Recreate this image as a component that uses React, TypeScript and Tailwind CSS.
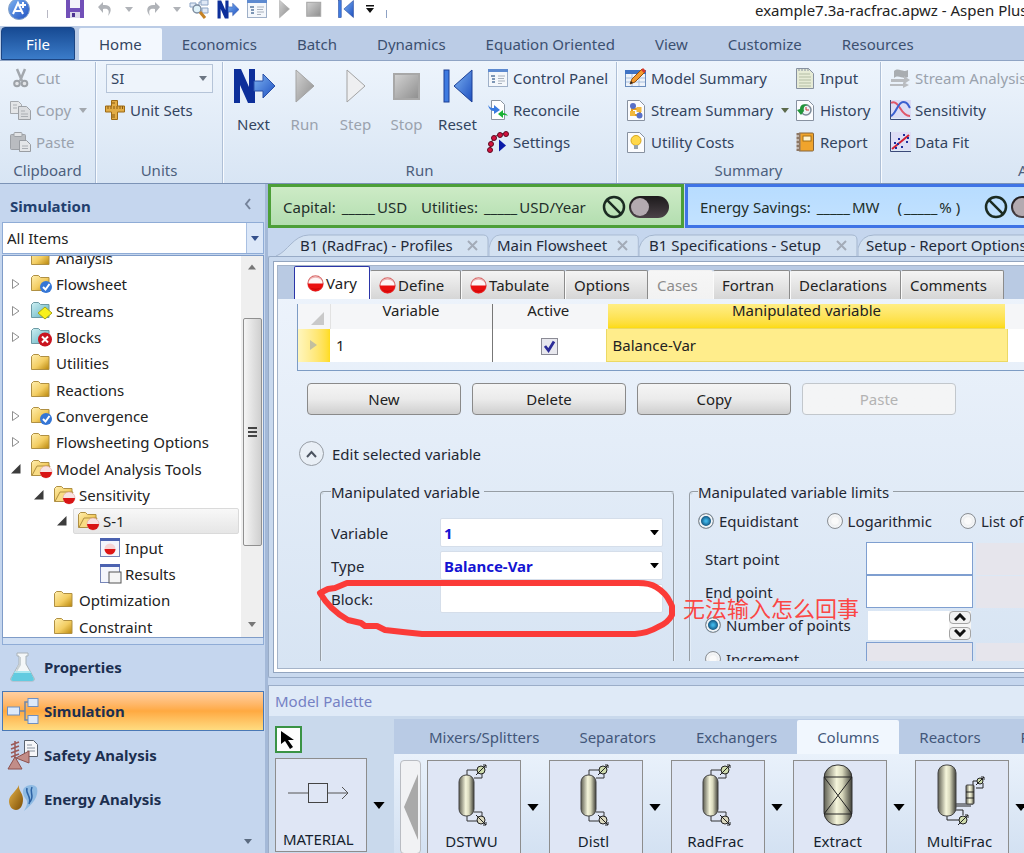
import type { ReactNode } from 'react';
import { Ban } from 'lucide-react';

const MENU_TABS = ['Home', 'Economics', 'Batch', 'Dynamics', 'Equation Oriented', 'View', 'Customize', 'Resources'];

const FORM_TABS = [
  { label: 'Define', status: true, width: 'w-[91px]' },
  { label: 'Tabulate', status: true, width: 'w-[104px]' },
  { label: 'Options', width: 'w-[83px]' },
  { label: 'Cases', disabled: true, width: 'w-[65px]' },
  { label: 'Fortran', width: 'w-[77px]' },
  { label: 'Declarations', width: 'w-[111px]' },
  { label: 'Comments', width: 'w-[103px]' },
];

const DOC_TABS = [
  { label: 'B1 (RadFrac) - Profiles', width: 'w-[213px]', pad: 'pl-6' },
  { label: 'Main Flowsheet', width: 'w-[150px]', pad: 'pl-2' },
  { label: 'B1 Specifications - Setup', width: 'w-[219px]', pad: 'pl-[10px]' },
  { label: 'Setup - Report Options', width: 'w-[219px]', pad: 'pl-2' },
];

type TreeItem = {
  label: string;
  level: number;
  icon: 'folder' | 'done' | 'streams' | 'blocks' | 'open' | 'input' | 'results';
  state?: 'closed' | 'open';
  selected?: boolean;
};

const TREE: TreeItem[] = [
  { label: 'Analysis', level: 0, icon: 'folder' },
  { label: 'Flowsheet', level: 0, icon: 'done', state: 'closed' },
  { label: 'Streams', level: 0, icon: 'streams', state: 'closed' },
  { label: 'Blocks', level: 0, icon: 'blocks', state: 'closed' },
  { label: 'Utilities', level: 0, icon: 'folder' },
  { label: 'Reactions', level: 0, icon: 'folder' },
  { label: 'Convergence', level: 0, icon: 'done', state: 'closed' },
  { label: 'Flowsheeting Options', level: 0, icon: 'folder', state: 'closed' },
  { label: 'Model Analysis Tools', level: 0, icon: 'open', state: 'open' },
  { label: 'Sensitivity', level: 1, icon: 'open', state: 'open' },
  { label: 'S-1', level: 2, icon: 'open', state: 'open', selected: true },
  { label: 'Input', level: 3, icon: 'input' },
  { label: 'Results', level: 3, icon: 'results' },
  { label: 'Optimization', level: 1, icon: 'folder' },
  { label: 'Constraint', level: 1, icon: 'folder' },
];

const INDENT = ['pl-2', 'pl-[31px]', 'pl-[54px]', 'pl-[77px]'];

/* ---------- small shared pieces ---------- */

function Caret({ className = 'text-[#5b6b80]', size = 8 }: { className?: string; size?: number }) {
  return (
    <svg width={size} height={size / 2 + 1} viewBox="0 0 8 5" className={`shrink-0 ${className}`} fill="currentColor">
      <path d="M0 0h8L4 5z" />
    </svg>
  );
}

function StatusDot({ size = 17 }: { size?: number }) {
  return (
    <svg width={size} height={size} viewBox="0 0 17 17" className="shrink-0">
      <circle cx="8.5" cy="8.5" r="7.6" fill="#fdf6f6" stroke="#d86a6a" strokeWidth="1.2" />
      <path d="M2 6a7 7 0 0 1 13 0 8 8 0 0 0-13 0z" fill="#eeb4b4" />
      <path d="M.7 8.5a7.8 7.8 0 0 0 15.6 0z" fill="#ea1010" />
      <path d="M3 12.5a7.8 7.8 0 0 0 11 0 9 5 0 0 1-11 0z" fill="#c40404" />
    </svg>
  );
}

function Defs() {
  return (
    <svg width="0" height="0" className="absolute">
      <defs>
        <linearGradient id="folder" x1="0" y1="0" x2="1" y2="1">
          <stop offset="0" stopColor="#ffefb0" />
          <stop offset="0.55" stopColor="#f3cd62" />
          <stop offset="1" stopColor="#b8860b" />
        </linearGradient>
        <linearGradient id="cyan" x1="0" y1="0" x2="1" y2="1">
          <stop offset="0" stopColor="#cdeff2" />
          <stop offset="1" stopColor="#5fb0c0" />
        </linearGradient>
        <linearGradient id="blue" x1="0" y1="0" x2="1" y2="1">
          <stop offset="0" stopColor="#7fb4f2" />
          <stop offset="1" stopColor="#1d4fc0" />
        </linearGradient>
        <linearGradient id="gray" x1="0" y1="0" x2="1" y2="1">
          <stop offset="0" stopColor="#d3d3d3" />
          <stop offset="1" stopColor="#8e8e8e" />
        </linearGradient>
        <linearGradient id="vessel" x1="0" y1="0" x2="1" y2="0">
          <stop offset="0" stopColor="#5e5e52" />
          <stop offset="0.45" stopColor="#f6f6dc" />
          <stop offset="0.65" stopColor="#d9d9bd" />
          <stop offset="1" stopColor="#3f3f38" />
        </linearGradient>
        <linearGradient id="amber" x1="0" y1="0" x2="1" y2="1">
          <stop offset="0" stopColor="#e9b64a" />
          <stop offset="1" stopColor="#7d4e05" />
        </linearGradient>
      </defs>
    </svg>
  );
}

function Svg({ w = 20, h = 20, box, children }: { w?: number; h?: number; box?: string; children: ReactNode }) {
  return (
    <svg width={w} height={h} viewBox={box ?? `0 0 ${w} ${h}`} className="relative shrink-0" fill="none">
      {children}
    </svg>
  );
}

/* ---------- icons ---------- */

const NextIcon = ({ w = 42, h = 36 }: { w?: number; h?: number }) => (
  <Svg w={w} h={h} box="0 0 42 36">
    <path d="M1 1h7l8 18V1h6v34h-7L7 17v18H1z" fill="#0d2f9a" />
    <path d="M21 13h9V6l12 12-12 12v-7h-9z" fill="url(#blue)" stroke="#2a50a8" />
  </Svg>
);

const PlayIcon = ({ w = 20, h = 36, hollow = false }: { w?: number; h?: number; hollow?: boolean }) => (
  <Svg w={w} h={h} box="0 0 20 36">
    <path d="M1 2l18 16L1 34z" fill={hollow ? '#eeeff1' : 'url(#gray)'} stroke="#a3a3a3" />
  </Svg>
);

const StopIcon = ({ w = 28, h = 36 }: { w?: number; h?: number }) => (
  <Svg w={w} h={h} box="0 0 28 36">
    <rect x="1" y="6" width="25" height="25" fill="url(#gray)" stroke="#a8a8a8" strokeWidth="2" />
  </Svg>
);

const ResetIcon = ({ w = 30, h = 36 }: { w?: number; h?: number }) => (
  <Svg w={w} h={h} box="0 0 30 36">
    <rect x="1" y="2" width="5" height="32" fill="#3e7ae0" stroke="#1b3f96" />
    <path d="M29 2v32L11 18z" fill="url(#blue)" stroke="#1b3f96" />
  </Svg>
);

const PanelIcon = () => (
  <Svg>
    <rect x="0.5" y="1.5" width="19" height="17" fill="#f4f7fb" stroke="#9fb0c8" />
    <rect x="0" y="1" width="20" height="3" fill="#5d8ad0" />
    <path d="M3 8h4M4 11h3M4 14h3" stroke="#56779f" strokeWidth="1.5" />
    <path d="M10 8h7M10 10.500h6M10 13h7M10 15.500h4" stroke="#a8b1bd" />
  </Svg>
);

const ReconcileIcon = () => (
  <Svg>
    <path d="M3.500 .5h9l4 4v15h-13z" fill="#fff" stroke="#8a94a0" />
    <path d="M0 5c2 3 4 3 6 3V5l6 5-6 4v-3C3 11 1 9 0 5z" fill="#3a7be0" />
    <path d="M20 16c-1-2-3-3-5-3v-3l-5 4 5 4v-3c2 0 4 0 5 1z" fill="#19b234" />
  </Svg>
);

const SettingsIcon = () => (
  <Svg w={22} h={22}>
    <path d="M3 18L4 12 7 6l6-3 7-1" stroke="#5a2030" />
    {[[3, 19], [4, 13], [7, 7], [13, 4], [19, 3]].map(([x, y]) => (
      <circle key={x} cx={x} cy={y} r="2.500" fill="#d5123f" stroke="#5c0b20" />
    ))}
    <path d="M12 8.500l7 6-7 6z" fill="#0a1aa8" />
  </Svg>
);

const CutIcon = () => (
  <Svg>
    <path d="M6 1l5 12M14 1L9 13" stroke="#a3a8ae" strokeWidth="2.500" />
    <circle cx="6" cy="15.500" r="2.800" stroke="#9da2a8" strokeWidth="2" fill="#e3e5e8" />
    <circle cx="13.500" cy="15.500" r="2.800" stroke="#9da2a8" strokeWidth="2" fill="#e3e5e8" />
  </Svg>
);

const CopyIcon = () => (
  <Svg w={22}>
    <path d="M.5 1.500h8l3 3v9H.5z" fill="#e4e6e8" stroke="#a5a9ae" />
    <path d="M8.500 6.500h8l4 4v9h-12z" fill="#dadcdf" stroke="#9da1a6" />
    <path d="M3 5h4M3 8h4M11 11h4M11 14h7M11 16.500h7" stroke="#aaaeb3" />
  </Svg>
);

const PasteIcon = () => (
  <Svg w={22}>
    <rect x="0.5" y="2.500" width="15" height="15" rx="1" fill="#b9bcc0" stroke="#9da1a6" />
    <rect x="4" y="0.500" width="8" height="4" rx="1" fill="#e1e3e5" stroke="#9da1a6" />
    <path d="M9.500 8.500h7l4 4v7h-11z" fill="#e4e6e8" stroke="#999da2" />
    <path d="M12 14h6M12 16.500h6" stroke="#aaaeb3" />
  </Svg>
);

const UnitIcon = () => (
  <Svg>
    <path d="M6.500 .5h6V6h7v6h-7v7.500h-6V12H.5V6h6z" fill="#e2ac45" stroke="#9c6a16" />
    <path d="M3 6v3M6 6v3M9 6v3M12 6v3M15 6v3M17.500 6v3M7 15h3M7 17h3M7 3h3" stroke="#8a5a10" />
  </Svg>
);

const ModelSummaryIcon = () => (
  <Svg w={22}>
    <rect x="0.5" y="2.500" width="20" height="16" fill="#eef3fa" stroke="#6a8cbc" />
    <rect x="0" y="2" width="21" height="4" fill="#3f73c4" />
    <path d="M1 10h19M1 14h19M7 6v12M14 6v12" stroke="#a9bfdd" />
    <path d="M5 16l2-5L17 1l3 3L10 14z" fill="#f39a2e" stroke="#96500c" />
    <path d="M16 2l2-2 3 3-2 2z" fill="#d63a2c" />
    <path d="M5 16l1-3 2 2z" fill="#222" />
  </Svg>
);

const DocIcon = ({ kind }: { kind: 'stream' | 'bulb' | 'history' | 'input' }) => (
  <Svg w={18} h={21}>
    <path d="M.5 .5h12l5 5v15H.5z" fill={kind === 'input' ? '#e6ebd6' : '#fbfcfe'} stroke="#8791a0" />
    {kind === 'stream' && (
      <>
        <path d="M5 6v9h8V9H6" stroke="#e29a20" strokeWidth="2" />
        <circle cx="6" cy="6" r="3" fill="#5770c8" />
        <rect x="9.500" y="7" width="5" height="5" fill="#f2b93e" />
        <rect x="3" y="11" width="5" height="5" fill="#f2b93e" />
        <circle cx="12.500" cy="15.500" r="3" fill="#5770c8" />
      </>
    )}
    {kind === 'bulb' && (
      <>
        <circle cx="9" cy="8.500" r="5" fill="#ffd84a" stroke="#d6a51c" />
        <path d="M7 13h4v4H7z" fill="#96a3ae" />
      </>
    )}
    {kind === 'history' && (
      <>
        <circle cx="10" cy="10" r="5" fill="#eef2f5" stroke="#7b8a98" strokeWidth="1.500" />
        <path d="M10 7v3h3" stroke="#c33" />
        <path d="M1 10l4 5 3-4C7 7 9 5 13 5 7 3 4 5 4 9z" fill="#23953a" />
      </>
    )}
    {kind === 'input' && (
      <>
        <path d="M3 6h11M3 9h12M3 12h12M3 15h12M3 18h12" stroke="#b3bda4" />
        <path d="M3 0v3M6 0v3M9 0v3M12 0v3" stroke="#8791a0" />
      </>
    )}
  </Svg>
);

const ReportIcon = () => (
  <Svg w={18}>
    <rect x="2.500" y="1" width="15" height="18" rx="1" fill="#f0a42c" stroke="#85643a" />
    <rect x="0.500" y="1" width="4" height="18" fill="#8d7764" />
    <rect x="7" y="4" width="8" height="5" fill="#fff3cf" stroke="#a36f14" />
    <path d="M0 4h3M0 8h3M0 12h3M0 16h3" stroke="#eee" />
  </Svg>
);

const StreamAnalysisIcon = () => (
  <Svg w={21}>
    <path d="M4 3c5-4 8 2 14-1v7c-6 3-9-3-14 1z" fill="#a9adb1" />
    <path d="M1 11h13V8l6 4-6 4v-2H1zM0 16h13v-2l6 3-6 3v-2H0z" fill="#b9bcc0" />
  </Svg>
);

const SensitivityIcon = () => (
  <Svg w={21}>
    <rect x="0" y="0" width="21" height="18" fill="#dcdcf5" />
    <path d="M.5 0v19.500H21" stroke="#3b4a78" />
    <path d="M1 3c3-2 6 0 9 5s6 8 10 8" stroke="#e0566a" strokeWidth="2" />
    <path d="M1 16C6 14 8 2 13 2s5 3 7 6" stroke="#3b5fd0" strokeWidth="2" />
  </Svg>
);

const DataFitIcon = () => (
  <Svg w={21}>
    <rect x="0" y="0" width="21" height="18" fill="#dedef6" />
    <path d="M.5 0v19.500H21" stroke="#3b4a78" />
    <path d="M2 17L19 3" stroke="#d01f34" strokeWidth="2" />
    <path d="M4 11h2M8 7h2M13 3h2M11 15h2M16 10h2M5 16h2M17 6h2M7 12h2" stroke="#1f2e9c" strokeWidth="2" />
  </Svg>
);

function TreeIcon({ kind }: { kind: TreeItem['icon'] }) {
  if (kind === 'input' || kind === 'results') {
    return (
      <Svg w={22} h={20}>
        <rect x="0.500" y="0.500" width="19" height="18" fill="#f4f6fc" stroke="#7786b8" />
        <rect x="0" y="0" width="20" height="3" fill="#4b62b0" />
        {kind === 'input' ? (
          <>
            <circle cx="10" cy="11" r="5.500" fill="#f6d5d5" />
            <path d="M4.500 11a5.500 5.500 0 0 0 11 0z" fill="#dd1414" />
          </>
        ) : (
          <rect x="9" y="8" width="12" height="11" fill="#f5f5f5" stroke="#555" />
        )}
      </Svg>
    );
  }
  const cyan = kind === 'streams' || kind === 'blocks';
  return (
    <Svg w={22} h={20}>
      <path d="M.5 3.500l2-2h5l2 2h8.500v13H.5z" fill={cyan ? 'url(#cyan)' : 'url(#folder)'} stroke={cyan ? '#6d9aa4' : '#b09043'} />
      {kind === 'open' && <path d="M1 16.500L6 7h13l-4 9.500z" fill="#f9dc84" stroke="#b09043" />}
      {kind === 'done' && (
        <>
          <circle cx="15" cy="13" r="6" fill="#3576d6" />
          <path d="M12 13l2.500 2.500L18.500 10" stroke="#fff" strokeWidth="2" />
        </>
      )}
      {kind === 'streams' && <path d="M14 6l7 6-7 6-7-6z" fill="#f8f01c" stroke="#a9a312" />}
      {kind === 'blocks' && (
        <>
          <circle cx="14" cy="12.500" r="7" fill="#c91420" />
          <path d="M11 9.500l6 6M17 9.500l-6 6" stroke="#fff" strokeWidth="2" />
        </>
      )}
      {kind === 'open' && (
        <>
          <circle cx="15" cy="13" r="6" fill="#f7e2e2" stroke="#d99" strokeWidth="0.500" />
          <path d="M9 13a6 6 0 0 0 12 0z" fill="#d81414" />
        </>
      )}
    </Svg>
  );
}

const FlaskIcon = () => (
  <Svg w={32} h={32}>
    <path d="M10 2h11v3h-2v8l8 14c1 2 0 3-2 3H6c-2 0-3-1-2-3l8-14V5h-2z" fill="#f4f7f8" stroke="#a9b2b8" />
    <path d="M8 20h15l4 8c0 1-1 2-2 2H6c-1 0-2-1-2-2z" fill="#62cbe0" />
    <path d="M8 20h15l1 2H7z" fill="#a9e8f0" />
    <path d="M12 6h2v8l-5 8 1-6 2-3z" fill="#c9d0d3" />
  </Svg>
);

const FlowIcon = () => (
  <Svg w={32} h={32}>
    <path d="M12 16h6M28 7H18v18h4" stroke="#6f86a8" strokeWidth="1.500" />
    <rect x="0.500" y="12" width="12" height="8" fill="#dde9fa" stroke="#6f8fc0" />
    <rect x="21" y="3.500" width="10" height="8" fill="#dde9fa" stroke="#6f8fc0" />
    <rect x="21" y="20.500" width="10" height="8" fill="#dde9fa" stroke="#6f8fc0" />
  </Svg>
);

const SafetyIcon = () => (
  <Svg w={32} h={32}>
    <path d="M17.500 1.500h9l4 4v12h-13z" fill="#f6f7f9" stroke="#59636e" />
    <path d="M20 6h5M20 9h8M20 12h8" stroke="#8994a0" />
    <path d="M8 19V2M4 6l8-3M4 10l8-3M4 14l8-3M4 18l8-3" stroke="#9c5a58" strokeWidth="1.500" />
    <path d="M8 18L1 30h14zM9 19l13-7v12z" fill="#c28d88" stroke="#8d514e" />
  </Svg>
);

const EnergyIcon = () => (
  <Svg w={32} h={32}>
    <path d="M12 2c-1 5 4 8 4 14 0 7-3 11-7 11s-7-4-7-9C2 12 9 9 12 2z" fill="url(#amber)" />
    <path d="M17 5c4-4 11-4 13 0 2 8-4 16-13 23 4-7 4-10 1-13-2-3-3-7-1-10z" fill="#8fbbe3" />
    <path d="M20 5c-2 6 5 8 2 16M25 4c-3 6 3 8-2 15" stroke="#2d63a5" strokeWidth="1.500" />
  </Svg>
);

function Exchanger({ x, y, r = 4 }: { x: number; y: number; r?: number }) {
  return (
    <g stroke="#222">
      <circle cx={x} cy={y} r={r} fill="#cfdcae" />
      <path d={`M${x - r - 1} ${y + r + 1}L${x + r + 1} ${y - r - 1}m-3 0h3v3`} />
    </g>
  );
}

function ColumnDrawing({ kind }: { kind: string }) {
  if (kind === 'Extract') {
    return (
      <Svg w={60} h={62}>
        <rect x="16" y="1" width="28" height="60" rx="13" fill="url(#vessel)" stroke="#333" />
        <path d="M16 13h28M16 50h28M16 13l28 37M44 13L16 50" stroke="#222" />
      </Svg>
    );
  }
  if (kind === 'MultiFrac') {
    return (
      <Svg w={60} h={62}>
        <path d="M17 50v6h13M26 40h17M26 42h15M26 46h7v5M43 22v-5h6M46 24h7v-5" stroke="#222" />
        <rect x="8" y="1" width="18" height="51" rx="8" fill="url(#vessel)" stroke="#444" />
        <rect x="36" y="21" width="8" height="19" rx="1" fill="url(#vessel)" stroke="#444" />
        <path d="M36 28h8M36 34h8" stroke="#222" />
        <Exchanger x={33} y={56} />
        <Exchanger x={50} y={17} r={3} />
      </Svg>
    );
  }
  return (
    <Svg w={60} h={62}>
      <path d="M25 12V6h12M32 14h8V8M25 51v6h12M32 48h8v6" stroke="#333" />
      <rect x="17" y="11" width="15" height="41" rx="7" fill="url(#vessel)" stroke="#444" />
      <Exchanger x={39} y={6} />
      <g stroke="#222">
        <circle cx="39" cy="56" r="4" fill="#dcd9bf" />
        <path d="M34 51l10 10m-3 0h3v-3" />
      </g>
    </Svg>
  );
}

/* ---------- ribbon ---------- */

function Command({ icon, label, disabled, menu }: { icon: ReactNode; label: string; disabled?: boolean; menu?: boolean }) {
  return (
    <button
      type="button"
      disabled={disabled}
      className="flex h-8 items-center gap-1 whitespace-nowrap text-[#33445f] disabled:text-[#9aa2ad]"
    >
      <span className="flex w-[22px] justify-center">{icon}</span>
      {label}
      {menu && <Caret className={disabled ? 'ml-1 text-[#a3a8ae]' : 'ml-1 text-[#5c6a4c]'} />}
    </button>
  );
}

function BigCommand({ icon, label, disabled }: { icon: ReactNode; label: string; disabled?: boolean }) {
  return (
    <button
      type="button"
      disabled={disabled}
      className="flex w-[51px] flex-col items-center gap-2 pt-1 text-[#33445f] disabled:text-[#9aa2ad]"
    >
      <span className="flex h-10 items-center">{icon}</span>
      {label}
    </button>
  );
}

function RibbonGroup({ title, className, children }: { title: string; className: string; children: ReactNode }) {
  return (
    <section className={`flex shrink-0 flex-col border-r border-[#aebfd6] shadow-[1px_0_0_#f8fbff] ${className}`}>
      <div className="flex h-[98px]">{children}</div>
      <h2 className="text-center text-[#4d5f7d]">{title}</h2>
    </section>
  );
}

function Ribbon() {
  return (
    <header>
      <div className="flex h-[26px] items-start justify-between overflow-hidden bg-white">
        <div className="flex h-[18px] items-center gap-3 pl-2">
          <Svg w={22} h={22}>
            <circle cx="11" cy="11" r="10.500" fill="url(#blue)" stroke="#87a3c8" />
            <path d="M5 16L10 5l5 11M7 13h6M15 4v6M12 7h6" stroke="#fff" strokeWidth="2" />
          </Svg>
          <span className="mx-[5px] h-2 w-px self-end bg-[#b8b8c4]" />
          <Svg w={20} h={20}>
            <path d="M1 1h18v18H1z" fill="#7250b8" />
            <path d="M5 1h10v8H5z" fill="#f4f2fa" />
            <path d="M5 13h10v6H5z" fill="#dcd8ea" />
            <path d="M7 14h3v4H7z" fill="#4d3390" />
          </Svg>
          <Svg w={16} h={16}>
            <path d="M1 6l5-5v3c8-1 10 5 5 11 2-6 0-8-5-7v4z" fill="#b0b3b8" />
          </Svg>
          <Caret className="text-[#b0b3b8]" />
          <Svg w={16} h={16}>
            <path d="M15 6l-5-5v3C2 3 0 9 5 15 3 9 5 7 10 8v4z" fill="#b0b3b8" />
          </Svg>
          <Caret className="text-[#b0b3b8]" />
          <div className="-ml-1 flex items-center gap-2">
            <Svg w={20} h={20}>
              <path d="M1 4h6v4H1zM12 1h7v5h-7zM13 9h6v5h-6zM7 6h3v6h3M10 6V3h2" fill="#dfe8f5" stroke="#8ba3c4" />
              <circle cx="8" cy="10" r="4" fill="#dff2fa" stroke="#7d8da0" strokeWidth="1.500" />
              <path d="M11 13l5 6" stroke="#c58225" strokeWidth="3" />
            </Svg>
            <NextIcon w={22} h={19} />
            <PanelIcon />
          </div>
          <div className="flex items-center gap-4">
            <PlayIcon w={11} h={20} />
            <StopIcon w={16} h={20} />
            <ResetIcon w={16} h={20} />
          </div>
          <Svg w={8} h={8}>
            <path d="M0 0h8v1.500H0zM0 3h8L4 8z" fill="#111" />
          </Svg>
          <span className="h-2 w-px self-end bg-[#8ea2c4]" />
        </div>
        <div className="w-[269px] shrink-0 overflow-hidden whitespace-nowrap text-[#222]">
          example7.3a-racfrac.apwz - Aspen Plus V8.4
        </div>
      </div>

      <nav className="flex h-[34px] items-end bg-[#bbcce6] pl-px">
        <button
          type="button"
          className="mr-1 h-[33px] w-[74px] rounded-t border border-[#1c4583] bg-linear-to-b from-[#174a93] to-[#3b7cc9] text-white"
        >
          File
        </button>
        {MENU_TABS.map((tab) => (
          <button
            key={tab}
            type="button"
            className={
              tab === 'Home'
                ? 'h-8 rounded-t-xs bg-[#f3f8fe] px-5 text-[#33445f]'
                : 'h-8 whitespace-nowrap px-5 text-[#3c5070]'
            }
          >
            {tab}
          </button>
        ))}
      </nav>

      <div className="flex h-[124px] overflow-hidden border-t border-b border-t-[#8fa4c4] border-b-[#7c93b6] bg-linear-to-b from-[#edf4fc] to-[#d8e5f4] pt-px">
        <RibbonGroup title="Clipboard" className="w-24">
          <div className="pl-[10px]">
            <Command icon={<CutIcon />} label="Cut" disabled />
            <Command icon={<CopyIcon />} label="Copy" disabled menu />
            <Command icon={<PasteIcon />} label="Paste" disabled />
          </div>
        </RibbonGroup>
        <RibbonGroup title="Units" className="w-[127px]">
          <div className="pl-2">
            <div className="relative ml-[2px] flex h-8 items-center">
              <select
                aria-label="Unit set"
                className="h-[29px] w-[107px] appearance-none border border-[#b5c4d8] bg-[#eef4fb] px-1 text-[#33445f]"
              >
                <option>SI</option>
              </select>
              <Caret className="pointer-events-none absolute right-[6px] text-[#6c7683]" />
            </div>
            <Command icon={<UnitIcon />} label="Unit Sets" />
          </div>
        </RibbonGroup>
        <RibbonGroup title="Run" className="w-[394px]">
          <div className="flex items-start pl-[5px]">
            <BigCommand icon={<NextIcon />} label="Next" />
            <BigCommand icon={<PlayIcon />} label="Run" disabled />
            <BigCommand icon={<PlayIcon hollow />} label="Step" disabled />
            <BigCommand icon={<StopIcon />} label="Stop" disabled />
            <BigCommand icon={<ResetIcon />} label="Reset" />
          </div>
          <div className="pl-1">
            <Command icon={<PanelIcon />} label="Control Panel" />
            <Command icon={<ReconcileIcon />} label="Reconcile" />
            <Command icon={<SettingsIcon />} label="Settings" />
          </div>
        </RibbonGroup>
        <RibbonGroup title="Summary" className="w-[264px]">
          <div className="w-[177px] shrink-0 pl-2">
            <Command icon={<ModelSummaryIcon />} label="Model Summary" />
            <Command icon={<DocIcon kind="stream" />} label="Stream Summary" menu />
            <Command icon={<DocIcon kind="bulb" />} label="Utility Costs" />
          </div>
          <div>
            <Command icon={<DocIcon kind="input" />} label="Input" />
            <Command icon={<DocIcon kind="history" />} label="History" />
            <Command icon={<ReportIcon />} label="Report" />
          </div>
        </RibbonGroup>
        <RibbonGroup title="Analysis" className="w-[332px]">
          <div className="pl-2">
            <Command icon={<StreamAnalysisIcon />} label="Stream Analysis" disabled menu />
            <Command icon={<SensitivityIcon />} label="Sensitivity" />
            <Command icon={<DataFitIcon />} label="Data Fit" />
          </div>
        </RibbonGroup>
      </div>
    </header>
  );
}

/* ---------- navigation pane ---------- */

function TreeRow({ item }: { item: TreeItem }) {
  return (
    <li className={`flex items-center ${INDENT[item.level]}`}>
      <span className="flex w-4 shrink-0 items-center">
        {item.state === 'closed' && (
          <Svg w={9} h={12}>
            <path d="M1.500 1.500v9L8 6z" stroke="#8f8f8f" fill="#fff" />
          </Svg>
        )}
        {item.state === 'open' && (
          <Svg w={10} h={10}>
            <path d="M9.500 0v9.500H0z" fill="#3c3c3c" />
          </Svg>
        )}
      </span>
      <span
        className={`flex h-[26px] items-center gap-[3px] whitespace-nowrap pl-1 ${
          item.selected
            ? 'mr-[2px] flex-1 rounded-xs border border-[#dadada] bg-linear-to-b from-[#f8f8f8] to-[#e6e6e6]'
            : ''
        }`}
      >
        <TreeIcon kind={item.icon} />
        {item.label}
      </span>
    </li>
  );
}

function NavigationPane() {
  const sections = [
    { label: 'Properties', icon: <FlaskIcon /> },
    { label: 'Simulation', icon: <FlowIcon />, active: true },
    { label: 'Safety Analysis', icon: <SafetyIcon /> },
    { label: 'Energy Analysis', icon: <EnergyIcon /> },
  ];
  return (
    <aside className="flex w-[268px] shrink-0 flex-col border-r-[3px] border-[#a4b9d8] pr-px pl-[2px]">
      <div className="flex h-[38px] items-center justify-between px-2 pt-[6px]">
        <h2 className="font-bold text-[#22406e]">Simulation</h2>
        <button type="button" aria-label="Collapse" className="px-1 pb-1">
          <Svg w={9} h={14}>
            <path d="M7 2L3 7l4 5" stroke="#75839a" strokeWidth="2" />
          </Svg>
        </button>
      </div>
      <div className="relative flex h-8 items-center">
        <select
          aria-label="Filter items"
          className="h-8 w-full appearance-none border border-[#8facd6] bg-white px-1 text-[#222]"
        >
          <option>All Items</option>
        </select>
        <span className="pointer-events-none absolute top-px right-px flex h-[30px] w-[17px] items-center justify-center border-l border-[#a9c0e2] bg-[#dbe7f8]">
          <Caret className="text-[#34508c]" />
        </span>
      </div>
      <div className="mt-px flex h-[383px] overflow-hidden border border-[#7f9cc8] bg-white">
        <ul className="-mt-[11px] grid h-[395px] flex-1 auto-rows-fr text-[#222]">
          {TREE.map((item) => (
            <TreeRow key={item.label} item={item} />
          ))}
        </ul>
        <div className="flex w-[22px] flex-col items-center bg-[#efefef] pt-2 pb-[10px]">
          <Svg w={8} h={6}>
            <path d="M0 5.500L4 .5l4 5z" fill="#777" />
          </Svg>
          <div className="mt-12 flex h-[228px] w-[19px] flex-col items-center justify-center gap-[2px] rounded-xs border border-[#909090] bg-linear-to-r from-[#f5f5f5] to-[#cfcfcf]">
            <span className="h-[2px] w-[9px] bg-[#444]" />
            <span className="h-[2px] w-[9px] bg-[#444]" />
            <span className="h-[2px] w-[9px] bg-[#444]" />
          </div>
          <Caret className="mt-auto text-[#777]" />
        </div>
      </div>
      <div className="mb-[2px] h-[7px] shrink-0 border-x border-b border-[#8facd6] bg-[#d0dff3]" />
      <nav className="flex flex-col gap-1">
        {sections.map((section) => (
          <button
            key={section.label}
            type="button"
            className={`flex h-10 items-center gap-[5px] border px-1 text-left font-bold text-[#1c2f50] ${
              section.active
                ? 'border-[#4b79b5] bg-linear-to-b from-[#ffcfa0] via-[#ffa940] to-[#ffdc80]'
                : 'border-transparent'
            }`}
          >
            {section.icon}
            {section.label}
          </button>
        ))}
      </nav>
      <button type="button" aria-label="Configure" className="mt-5 mr-3 self-end">
        <Caret />
      </button>
    </aside>
  );
}

/* ---------- dashboard ---------- */

function ActivationToggle() {
  return (
    <span className="flex items-center gap-[3px]">
      <Ban size={24} strokeWidth={2.5} className="text-[#1b2b22]" />
      <button
        type="button"
        role="switch"
        aria-checked={false}
        aria-label="Activate analysis"
        className="flex h-[22px] w-10 items-center rounded-full bg-linear-to-b from-[#1d1a1c] to-[#4b4348] px-[2px]"
      >
        <span className="size-[18px] rounded-full bg-[#b3aab0]" />
      </button>
    </span>
  );
}

function Blank() {
  return <span className="mx-[2px]">_____</span>;
}

function Dashboard() {
  return (
    <div className="flex h-11 overflow-hidden whitespace-pre text-[#1f2f2a]">
      <div className="flex w-[416px] shrink-0 items-center justify-between border-[3px] border-[#4c9f38] bg-linear-to-b from-[#cdebc6] to-[#b3deb0] px-3 pt-[2px]">
        <span className="flex gap-[14px]">
          <span>Capital: <Blank />USD</span>
          <span>Utilities: <Blank />USD/Year</span>
        </span>
        <ActivationToggle />
      </div>
      <div className="ml-px flex w-[381px] shrink-0 items-center justify-between border-[3px] border-[#3f73e6] bg-linear-to-b from-[#b7dcff] to-[#c3e2ff] px-3 pt-[2px]">
        <span className="flex gap-[18px]">
          <span>Energy Savings: <Blank />MW</span>
          <span>(<Blank />% )</span>
        </span>
        <ActivationToggle />
      </div>
    </div>
  );
}

/* ---------- form ---------- */

function DocumentTabs() {
  return (
    <div className="flex h-7 items-end overflow-hidden pl-2">
      {DOC_TABS.map((tab, idx) => (
        <button
          key={tab.label}
          type="button"
          className={`relative flex h-[22px] shrink-0 items-center justify-between pr-[11px] whitespace-nowrap text-[#1f2a3a] ${tab.width} ${tab.pad}`}
        >
          <svg
            className="absolute inset-0 h-full w-full"
            viewBox="0 0 220 22"
            preserveAspectRatio="none"
            fill="none"
          >
            <path
              d={idx === 0 ? 'M0 22C12 18 18 1 34 1h180q5 0 5 5v16' : 'M0 22V14Q4 1 16 1h198q5 0 5 5v16'}
              fill="#d3e1f1"
              stroke="#a4b6ce"
            />
          </svg>
          <span className="relative">{tab.label}</span>
          <Svg w={11} h={11}>
            <path d="M1 1l9 9M10 1l-9 9" stroke="#a3abb8" strokeWidth="2" />
          </Svg>
        </button>
      ))}
    </div>
  );
}

function FormTabs() {
  return (
    <div role="tablist" className="flex h-[33px] shrink-0 items-end overflow-hidden bg-[#b9cae3] pl-4 text-[#222]">
      <button
        type="button"
        role="tab"
        aria-selected
        className="flex h-[33px] w-[76px] shrink-0 items-center justify-center gap-[2px] rounded-t-xs border border-b-0 border-[#2b35a8] bg-white"
      >
        <StatusDot />
        Vary
      </button>
      {FORM_TABS.map((tab) => (
        <button
          key={tab.label}
          type="button"
          role="tab"
          disabled={tab.disabled}
          className={`flex h-[29px] shrink-0 items-center gap-[2px] rounded-t-xs border border-b-0 border-l-[#fafafa] border-[#8b8b8b] bg-linear-to-b from-[#f4f4f4] to-[#d6d6d6] pl-2 disabled:border-transparent disabled:from-[#f6f6f6] disabled:to-[#f2f2f2] disabled:text-[#8d8d8d] ${tab.width}`}
        >
          {tab.status && <StatusDot />}
          {tab.label}
        </button>
      ))}
    </div>
  );
}

function VariableTable() {
  return (
    <div className="ml-[19px] shrink-0 overflow-hidden border-b border-l border-[#7d9cc4] pb-2">
      <table className="w-[825px] table-fixed border-collapse text-[#222]">
        <thead>
          <tr className="h-6 bg-[#f5f6f8] leading-3">
            <th className="w-8 border-r border-[#e2e2e2] p-0">
              <Svg w={26} h={22}>
                <path d="M26 7v13H13z" fill="#c9c9c9" />
              </Svg>
            </th>
            <th className="w-[162px] border-r border-[#777] p-0 pb-3 font-normal">Variable</th>
            <th className="w-[114px] p-0 pb-3 font-normal">Active</th>
            <th className="w-[401px] border-r-4 border-l-4 border-[#f5f6f8] bg-linear-to-b from-[#ffee85] to-[#fddb0c] p-0 pb-3 font-normal">
              Manipulated variable
            </th>
            <th className="p-0" />
          </tr>
        </thead>
        <tbody>
          <tr className="h-[33px] bg-white">
            <td className="bg-linear-to-r from-[#fff6bd] to-[#ffdc18] p-0">
              <Svg w={26} h={14}>
                <path d="M12 2v10l7-5z" fill="#c3bf9f" />
              </Svg>
            </td>
            <td className="border-r border-[#777] px-[6px] py-0">1</td>
            <td className="p-0 text-center">
              <label className="relative inline-flex size-[17px] align-middle">
                <input
                  type="checkbox"
                  defaultChecked
                  aria-label="Active"
                  className="peer size-[17px] appearance-none border border-[#8b8b95] bg-[#e8e8ee]"
                />
                <svg viewBox="0 0 17 17" className="pointer-events-none absolute inset-0 hidden peer-checked:block">
                  <path d="M4 8l3.500 4.500L13 3.500" stroke="#2c2c98" strokeWidth="2.800" fill="none" />
                </svg>
              </label>
            </td>
            <td className="border border-[#ecd964] bg-[#ffed8b] px-[6px] py-0">Balance-Var</td>
            <td />
          </tr>
        </tbody>
      </table>
    </div>
  );
}

function FormButton({ label, disabled }: { label: string; disabled?: boolean }) {
  return (
    <button
      type="button"
      disabled={disabled}
      className="h-8 w-[154px] rounded border border-[#8a8a8a] bg-linear-to-b from-[#f5f5f5] via-[#ebebeb] to-[#cfcfcf] text-[#222] disabled:border-[#c2c7cc] disabled:from-[#f4f5f6] disabled:via-[#f4f5f6] disabled:to-[#f4f5f6] disabled:text-[#b3b3b3]"
    >
      {label}
    </button>
  );
}

function SelectRow({ id, label, value }: { id: string; label: string; value: string }) {
  return (
    <div className="relative flex h-[33px] items-center">
      <label htmlFor={id} className="w-[109px]">{label}</label>
      <select
        id={id}
        className="h-[29px] w-[223px] appearance-none rounded-xs border border-[#d5deea] bg-white px-[3px] font-bold text-[#1414d2]"
      >
        <option>{value}</option>
      </select>
      <Caret size={9} className="pointer-events-none absolute right-[14px] text-black" />
    </div>
  );
}

function Radio({ name, label, checked }: { name: string; label: string; checked?: boolean }) {
  return (
    <label className="flex items-center gap-[5px] whitespace-nowrap">
      <input
        type="radio"
        name={name}
        defaultChecked={checked}
        className="size-4 appearance-none rounded-full border border-[#8b8f94] bg-[radial-gradient(circle,#fafafa_30%,#c9cdd2)] shadow-[inset_0_0_0_2px_#f2f4f6] checked:bg-[radial-gradient(circle,#3fb4e6_10%,#0d4a75_55%)]"
      />
      {label}
    </label>
  );
}

function LimitInput({ id, label }: { id: string; label: string }) {
  return (
    <div className="flex h-[33px] items-center">
      <label htmlFor={id} className="w-[161px] shrink-0">{label}</label>
      <input id={id} className="h-[33px] w-[107px] shrink-0 border border-[#7f9fd0] bg-white px-1" />
      <span className="ml-[3px] h-8 flex-1 bg-[#e6e5ec]" />
    </div>
  );
}

function EditForm() {
  return (
    <div className="flex gap-[14px] overflow-hidden pl-[42px]">
      <fieldset className="h-[200px] w-[355px] shrink-0 rounded border-2 border-[#e3edf8] pl-[9px] [border-style:groove]">
        <legend className="pr-1">Manipulated variable</legend>
        <div className="pt-[14px]">
          <SelectRow id="variable" label="Variable" value="1" />
          <SelectRow id="type" label="Type" value="Balance-Var" />
          <div className="flex h-[33px] items-center">
            <label htmlFor="block" className="w-[109px]">Block:</label>
            <input id="block" className="h-[29px] w-[223px] rounded-xs border border-[#d5deea] bg-white px-1" />
          </div>
        </div>
      </fieldset>
      <fieldset className="h-[200px] w-[420px] shrink-0 rounded border-2 border-[#e3edf8] pl-[7px] [border-style:groove]">
        <legend className="pr-1">Manipulated variable limits</legend>
        <div className="flex h-10 items-center gap-7 pb-[2px]">
          <Radio name="spacing" label="Equidistant" checked />
          <Radio name="spacing" label="Logarithmic" />
          <Radio name="spacing" label="List of values" />
        </div>
        <div className="pl-[7px]">
          <LimitInput id="start" label="Start point" />
          <LimitInput id="end" label="End point" />
          <div className="flex h-[34px] items-center">
            <div className="w-[163px]">
              <Radio name="step" label="Number of points" checked />
            </div>
            <input aria-label="Number of points" className="h-[29px] w-[81px] bg-white px-1" />
            <span className="flex h-[29px] w-[22px] flex-col justify-between bg-[#f5f5f5]">
              <button type="button" aria-label="Increase" className="flex h-[13px] items-center justify-center rounded border border-[#a4a4a4] bg-[#f1f1f1]">
                <Svg w={12} h={8}>
                  <path d="M1 7l5-5 5 5" stroke="#111" strokeWidth="3" />
                </Svg>
              </button>
              <button type="button" aria-label="Decrease" className="flex h-[13px] items-center justify-center rounded border border-[#a4a4a4] bg-[#f1f1f1]">
                <Svg w={12} h={8}>
                  <path d="M1 1l5 5 5-5" stroke="#111" strokeWidth="3" />
                </Svg>
              </button>
            </span>
          </div>
          <div className="flex h-[33px] items-center">
            <div className="w-[161px]">
              <Radio name="step" label="Increment" />
            </div>
            <input aria-label="Increment" disabled className="h-[33px] w-[107px] shrink-0 border border-[#7f9fd0] bg-[#e6e5ec]" />
            <span className="ml-[3px] h-8 flex-1 bg-[#e6e5ec]" />
          </div>
        </div>
      </fieldset>
    </div>
  );
}

function SensitivityForm() {
  return (
    <section className="flex min-h-0 flex-1 flex-col overflow-hidden rounded-l-xs border border-r-0 border-[#98abc6] bg-[#c9d9ee] p-1 pr-0">
      <div className="flex min-h-0 flex-1 flex-col border border-r-0 border-[#93a5bf] bg-white p-[3px] pr-0">
        <div className="flex min-h-0 flex-1 flex-col border border-r-0 border-[#a5b4c9] bg-linear-to-b from-[#eef4fc] to-[#d7e4f3] pb-[7px]">
          <FormTabs />
          <div className="flex min-h-0 flex-1 flex-col overflow-hidden pt-[5px] text-[#1f2733]">
            <VariableTable />
            <div className="flex shrink-0 gap-[11px] pt-3 pl-[29px]">
              <FormButton label="New" />
              <FormButton label="Delete" />
              <FormButton label="Copy" />
              <FormButton label="Paste" disabled />
            </div>
            <button type="button" aria-expanded className="mt-[26px] mb-4 ml-[21px] flex shrink-0 items-center gap-2">
              <span className="flex size-[25px] items-center justify-center rounded-full border border-[#969ca4] bg-[#e9eff6]">
                <Svg w={11} h={8}>
                  <path d="M1 7l4.500-5L10 7" stroke="#4c5460" strokeWidth="2" />
                </Svg>
              </span>
              Edit selected variable
            </button>
            <EditForm />
          </div>
        </div>
      </div>
    </section>
  );
}

/* ---------- model palette ---------- */

function PaletteItem({ label, children }: { label: string; children: ReactNode }) {
  return (
    <div className="flex shrink-0 items-center">
      <button
        type="button"
        className="flex h-[94px] w-[94px] flex-col items-center justify-between border border-[#8d8d8d] bg-[#dfe6f5] pt-[3px] pr-[5px] pb-[2px] text-[#161f2e]"
      >
        {children}
        <span>{label}</span>
      </button>
      <span className="flex w-7 pl-[6px]">
        <Caret size={12} className="text-black" />
      </span>
    </div>
  );
}

function ModelPalette() {
  const tabs = ['Mixers/Splitters', 'Separators', 'Exchangers', 'Columns', 'Reactors', 'Pressure Changers'];
  return (
    <section className="mt-[7px] h-[168px] shrink-0 overflow-hidden border-t border-l border-[#9badc8] bg-[#c9d9ec]">
      <h2 className="h-[33px] border-b-[3px] border-[#c9d9ec] bg-[#dfeaf7] pt-[5px] pl-[6px] text-[#7581c4]">Model Palette</h2>
      <div className="flex">
        <div className="w-[125px] shrink-0 pt-[7px] pl-[6px]">
          <button
            type="button"
            aria-label="Select"
            className="flex size-[27px] items-center justify-center border-2 border-[#3a9345] bg-[#fdfdfd]"
          >
            <Svg w={16} h={20}>
              <path d="M0 1v13l4-3 5 8 3-2-5-7h6z" fill="#000" />
            </Svg>
          </button>
          <div className="mt-[5px]">
            <PaletteItem label="MATERIAL">
              <Svg w={64} h={62}>
                <path d="M2 31h20M42 31h20M56 25l6 6-6 6" stroke="#555" />
                <rect x="22.500" y="21.500" width="19" height="19" stroke="#444" fill="#dfe6f5" />
              </Svg>
            </PaletteItem>
          </div>
        </div>
        <div className="min-w-0 flex-1 bg-linear-to-b from-[#f1f7fe] to-[#d3e1f2]">
          <div className="flex h-[35px] items-end overflow-hidden bg-[#b9cbe5] pl-[15px]">
            {tabs.map((tab) => (
              <button
                key={tab}
                type="button"
                className={`whitespace-nowrap px-5 text-[#43577a] ${
                  tab === 'Columns' ? 'h-[34px] rounded-t-xs bg-[#f1f7fe]' : 'h-[34px]'
                }`}
              >
                {tab}
              </button>
            ))}
          </div>
          <div className="flex pt-[6px] pl-[6px]">
            <button
              type="button"
              aria-label="Scroll left"
              className="mr-[6px] flex h-[94px] w-[21px] shrink-0 items-center justify-center rounded border border-[#b9bcc2] bg-[#f1f2f4]"
            >
              <Svg w={14} h={66}>
                <path d="M14 0v66L0 33z" fill="#a9a9a9" />
              </Svg>
            </button>
            {['DSTWU', 'Distl', 'RadFrac', 'Extract', 'MultiFrac'].map((name) => (
              <PaletteItem key={name} label={name}>
                <ColumnDrawing kind={name} />
              </PaletteItem>
            ))}
          </div>
        </div>
      </div>
    </section>
  );
}

/* Hand-drawn remark lying over the form */
function Annotation() {
  return (
    <div className="pointer-events-none absolute top-[576px] left-[316px] flex items-center">
      <svg width="364" height="64" viewBox="0 0 364 64" fill="none">
        <path
          d="M4 17L12 13 19 12 31 7H322Q334 7 340 11 350 17 354 26L356 30V39Q352 47 342 51 332 57 319 58H106Q86 56 69 54L61 50H49L45 47 32 44Q14 34 4 17z"
          stroke="#fb3b38"
          strokeWidth="6"
          strokeLinejoin="round"
        />
      </svg>
      <span className="ml-[3px] text-[22px] whitespace-nowrap text-[#fb4745]">无法输入怎么回事</span>
    </div>
  );
}

export default function App() {
  return (
    <div className="relative flex h-screen flex-col overflow-hidden bg-[#c5d6ee] font-['Noto_Sans','Noto_Sans_CJK_SC',sans-serif] text-[15px] leading-5">
      <Defs />
      <Ribbon />
      <div className="flex min-h-0 flex-1">
        <NavigationPane />
        <main className="flex min-w-0 flex-1 flex-col">
          <Dashboard />
          <DocumentTabs />
          <SensitivityForm />
          <ModelPalette />
        </main>
      </div>
      <Annotation />
    </div>
  );
}
